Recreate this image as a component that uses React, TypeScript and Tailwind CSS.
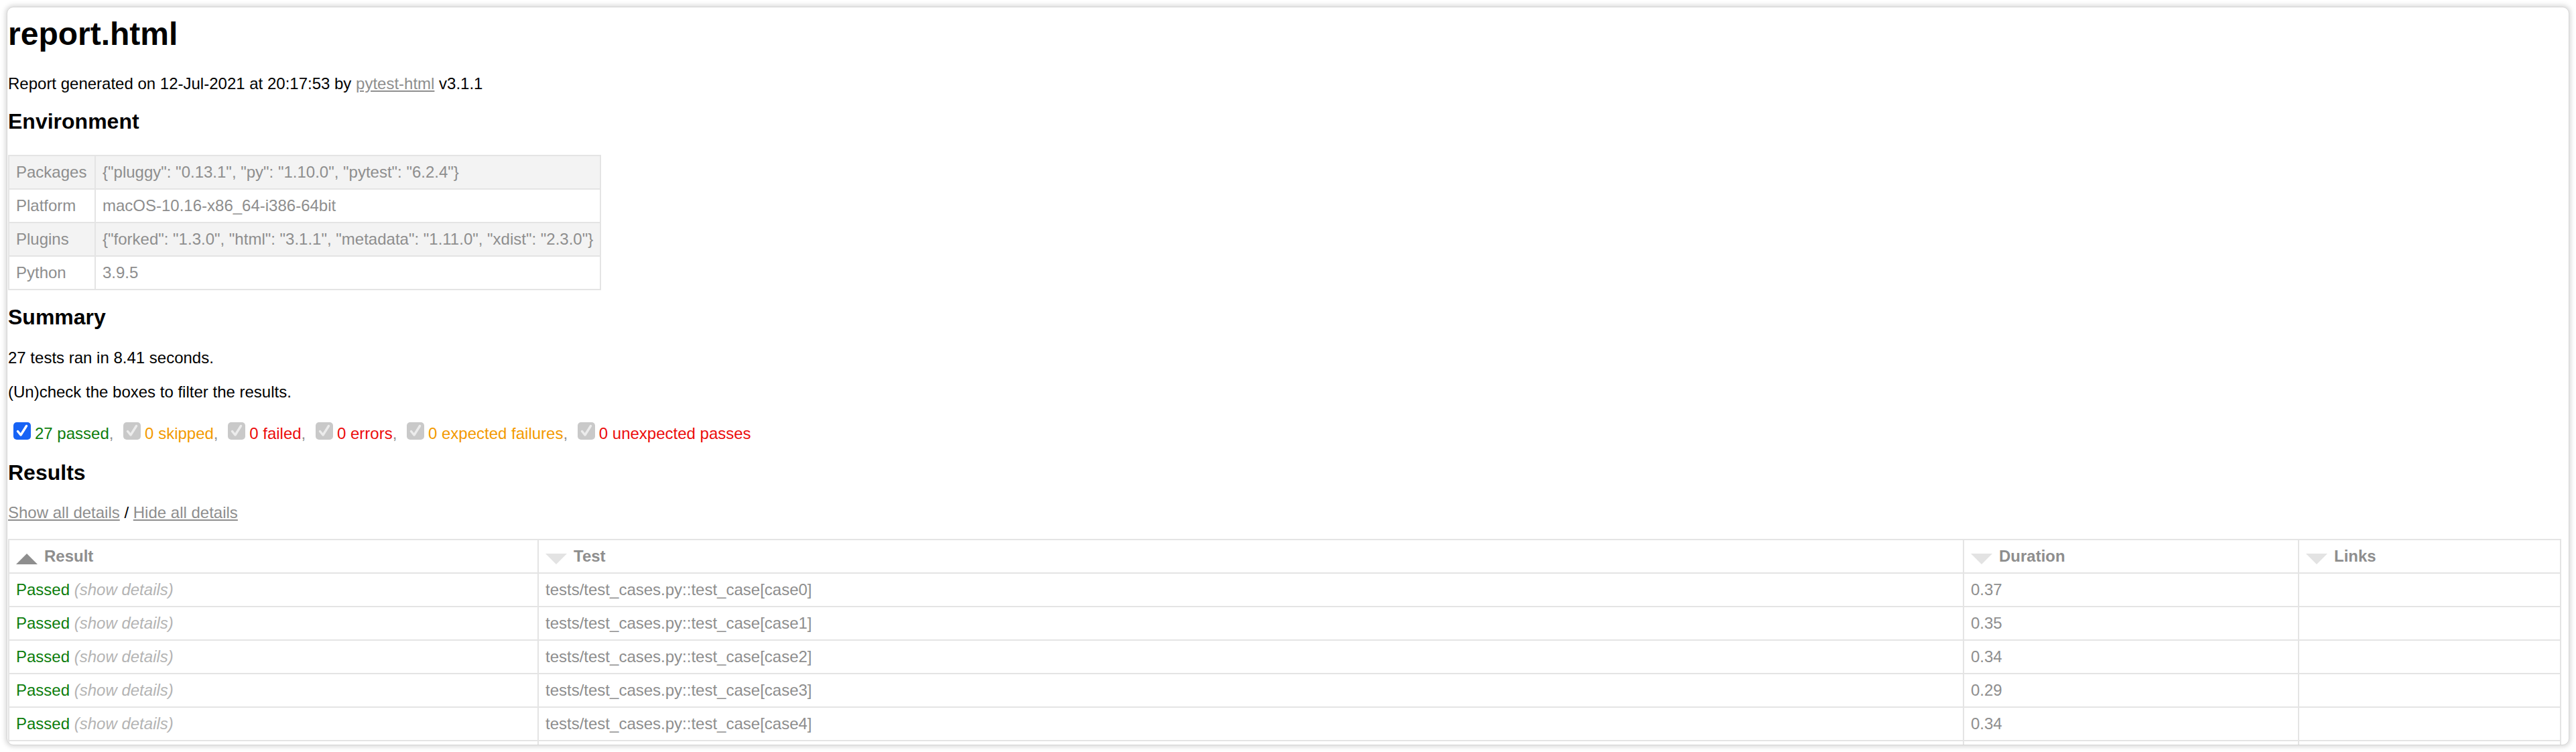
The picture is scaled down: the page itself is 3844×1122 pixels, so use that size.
import React from 'react';

type Env = { key: string; value: string };

const environment: Env[] = [
  { key: 'Packages', value: '{"pluggy": "0.13.1", "py": "1.10.0", "pytest": "6.2.4"}' },
  { key: 'Platform', value: 'macOS-10.16-x86_64-i386-64bit' },
  { key: 'Plugins', value: '{"forked": "1.3.0", "html": "3.1.1", "metadata": "1.11.0", "xdist": "2.3.0"}' },
  { key: 'Python', value: '3.9.5' },
];

const filters = [
  { label: '27 passed', color: 'text-[#0c7d0c]', active: true },
  { label: '0 skipped', color: 'text-[#f39a00]', active: false },
  { label: '0 failed', color: 'text-[#ec0c0c]', active: false },
  { label: '0 errors', color: 'text-[#ec0c0c]', active: false },
  { label: '0 expected failures', color: 'text-[#f39a00]', active: false },
  { label: '0 unexpected passes', color: 'text-[#ec0c0c]', active: false },
];

const results = [
  { test: 'tests/test_cases.py::test_case[case0]', duration: '0.37' },
  { test: 'tests/test_cases.py::test_case[case1]', duration: '0.35' },
  { test: 'tests/test_cases.py::test_case[case2]', duration: '0.34' },
  { test: 'tests/test_cases.py::test_case[case3]', duration: '0.29' },
  { test: 'tests/test_cases.py::test_case[case4]', duration: '0.34' },
];

const Checkbox: React.FC<{ active: boolean }> = ({ active }) => (
  <span
    className={
      active
        ? 'ml-[8px] mr-[6px] flex h-[26px] w-[26px] shrink-0 items-center justify-center rounded-[5px] bg-[#1763f5]'
        : 'ml-[8px] mr-[6px] flex h-[26px] w-[26px] shrink-0 items-center justify-center rounded-[5px] bg-[#c9c9c9]'
    }
  >
    <svg width="26" height="26" viewBox="0 0 26 26" fill="none">
      <path
        d="M6.5 13.5 L11 19 L19.5 5.5"
        stroke={active ? '#ffffff' : '#ececec'}
        strokeWidth="3.4"
        strokeLinecap="round"
        strokeLinejoin="round"
      />
    </svg>
  </span>
);

const SortIcon: React.FC<{ active?: boolean }> = ({ active }) =>
  active ? (
    <span className="float-left mt-[10px] mr-[10px] h-0 w-0 border-x-[16px] border-b-[16px] border-x-transparent border-b-[#8e8e8e]" />
  ) : (
    <span className="float-left mt-[10px] mr-[10px] h-0 w-0 border-x-[16px] border-t-[16px] border-x-transparent border-t-[#e3e3e3]" />
  );

const cell = 'border-2 border-[#e4e4e4] p-[10px]';

export default function App() {
  return (
    <div className="h-[1122px] w-[3844px] overflow-hidden bg-white p-[10px] font-['Liberation_Sans',Arial,sans-serif] text-[24px] leading-[28px] text-[#8e8e8e]">
      <div className="h-[1102px] w-[3824px] overflow-hidden rounded-[10px] border border-[#d6d6d6] bg-white pl-[1px] shadow-[0_0_7px_2px_rgba(0,0,0,0.16)]">
        <h1 className="mt-[12px] text-[48px] font-bold leading-[55px] text-black">report.html</h1>

        <p className="mt-[33px] text-black">
          Report generated on 12-Jul-2021 at 20:17:53 by{' '}
          <a href="#" className="text-[#8e8e8e] underline">pytest-html</a> v3.1.1
        </p>

        <h2 className="mt-[24px] text-[32px] font-bold leading-[37px] text-black">Environment</h2>

        <table className="mt-[31px] border-collapse whitespace-nowrap">
          <tbody>
            {environment.map((row, i) => (
              <tr key={row.key} className={i % 2 === 0 ? 'bg-[#f3f3f3]' : 'bg-white'}>
                <td className={`w-[129px] ${cell}`}>{row.key}</td>
                <td className={cell}>{row.value}</td>
              </tr>
            ))}
          </tbody>
        </table>

        <h2 className="mt-[22px] text-[32px] font-bold leading-[37px] text-black">Summary</h2>
        <p className="mt-[28px] text-black">27 tests ran in 8.41 seconds.</p>
        <p className="mt-[23px] text-black">(Un)check the boxes to filter the results.</p>

        <div className="mt-[31px] flex items-start">
          {filters.map((f, i) => (
            <div key={f.label} className="flex items-start">
              <Checkbox active={f.active} />
              <span className={`mt-[3px] ${f.color}`}>{f.label}</span>
              {i < filters.length - 1 && <span className="mt-[3px] whitespace-pre">, </span>}
            </div>
          ))}
        </div>

        <h2 className="mt-[26px] text-[32px] font-bold leading-[37px] text-black">Results</h2>
        <p className="mt-[27px] text-black">
          <a href="#" className="text-[#8e8e8e] underline">Show all details</a> /{' '}
          <a href="#" className="text-[#8e8e8e] underline">Hide all details</a>
        </p>

        <table className="mt-[25px] w-[3808px] table-fixed border-collapse border-2 border-[#e4e4e4] text-left">
          <colgroup>
            <col className="w-[790px]" />
            <col className="w-[2127px]" />
            <col className="w-[500px]" />
            <col className="w-[391px]" />
          </colgroup>
          <thead>
            <tr>
              <th className={`${cell} font-bold`}>
                <SortIcon active />
                Result
              </th>
              <th className={`${cell} font-bold`}>
                <SortIcon />
                Test
              </th>
              <th className={`${cell} font-bold`}>
                <SortIcon />
                Duration
              </th>
              <th className={`${cell} font-bold`}>
                <SortIcon />
                Links
              </th>
            </tr>
          </thead>
          <tbody>
            {results.map((r) => (
              <tr key={r.test}>
                <td className={cell}>
                  <span className="text-[#0c7d0c]">Passed</span>
                  <span className="italic text-[#b4b4b4]"> (show details)</span>
                </td>
                <td className={cell}>{r.test}</td>
                <td className={cell}>{r.duration}</td>
                <td className={cell} />
              </tr>
            ))}
            {/* next row is cut off by the window edge */}
            <tr className="h-[50px]">
              <td className={cell} />
              <td className={cell} />
              <td className={cell} />
              <td className={cell} />
            </tr>
          </tbody>
        </table>
      </div>
    </div>
  );
}
